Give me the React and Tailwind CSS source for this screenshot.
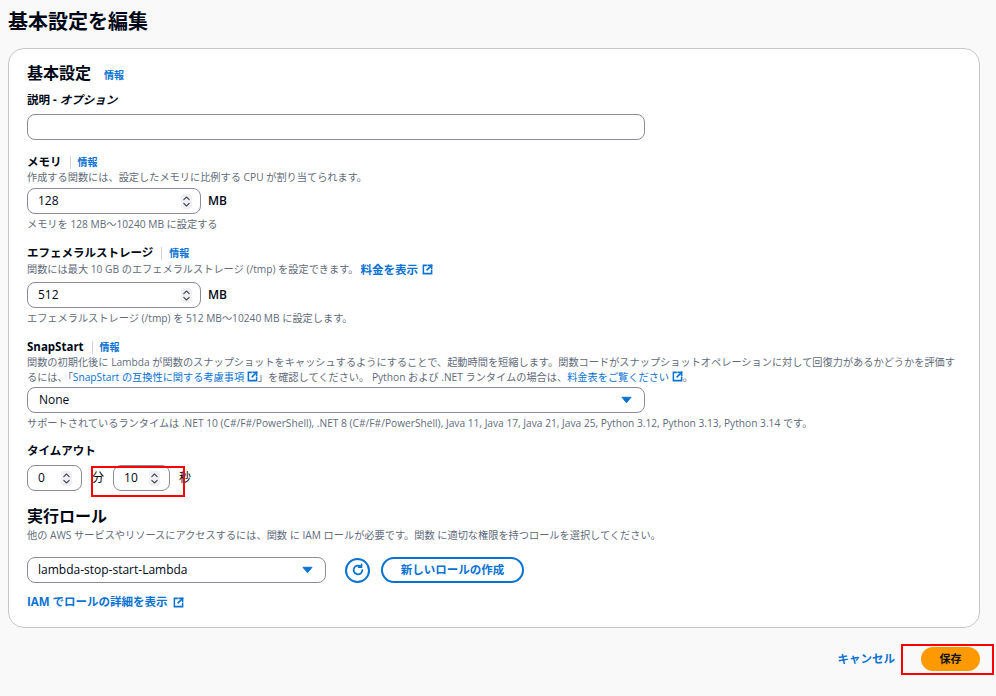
import React from "react";

const FONT = { fontFamily: '"Open Sans", "Noto Sans CJK JP", sans-serif' };

function Ext({ className = "" }) {
  return (
    <svg viewBox="0 0 16 16" className={"inline-block w-[11px] h-[11px] " + className} fill="none" stroke="currentColor" strokeWidth="2.2" strokeLinecap="square">
      <path d="M6 2H2v12h12v-4" />
      <path d="M9 2h5v5" />
      <path d="M14 2L7.5 8.5" />
    </svg>
  );
}

function Info() {
  return <a className="text-[10px] font-bold text-[#0972d3] leading-[16px]">情報</a>;
}

function Label({ children, info, className = "" }) {
  return (
    <div className={"flex items-center text-[11.5px] font-bold leading-[16px] text-[#000716] " + className}>
      <span>{children}</span>
      {info && (
        <>
          <span className="ml-[8px] mr-[7px] h-[13px] w-px bg-[#d1d1d6]" />
          <Info />
        </>
      )}
    </div>
  );
}

function Desc({ children, className = "" }) {
  return <div className={"text-[10.2px] leading-[15px] text-[#5f6b7a] " + className}>{children}</div>;
}

function Spinner() {
  return (
    <span className="flex h-[15px] w-[11px] items-center justify-center rounded-[3px] bg-[#f0f0f2]">
      <svg viewBox="0 0 10 14" className="h-[13px] w-[9px]" fill="none" stroke="#414d5c" strokeWidth="1.3" strokeLinecap="round" strokeLinejoin="round">
        <path d="M2 5L5 2l3 3" />
        <path d="M2 9l3 3 3-3" />
      </svg>
    </span>
  );
}

function NumInput({ value, w, pl = "pl-[10px]", pr = "pr-[9px]" }) {
  return (
    <div className={"flex h-[26px] items-center justify-between rounded-[8px] border border-[#8c8c94] bg-white text-[12px] text-[#000716] " + w + " " + pl + " " + pr}>
      <span>{value}</span>
      <Spinner />
    </div>
  );
}

function Caret() {
  return (
    <svg viewBox="0 0 12 8" className="h-[8px] w-[11px]">
      <path d="M1 1h10L6 7z" fill="#0972d3" stroke="#0972d3" strokeWidth="1" strokeLinejoin="round" />
    </svg>
  );
}

export default function App() {
  return (
    <div className="h-[696px] w-[996px] overflow-hidden bg-[#f9f9fa] text-[#000716]" style={FONT}>
      <h1 className="px-2 pt-[9px] text-[20px] font-bold leading-[26px]">基本設定を編集</h1>

      <div className="ml-2 mt-[13px] h-[580px] w-[972px] rounded-[16px] border border-[#c6c6cd] bg-white px-[18px] pt-[13px]">
        <div className="flex items-center leading-[22px]">
          <span className="text-[16px] font-bold">基本設定</span>
          <span className="ml-[13px]"><Info /></span>
        </div>

        <Label className="mt-[8px]">
          説明 - <i>オプション</i>
        </Label>
        <div className="mt-[6px] h-[26px] w-[618px] rounded-[8px] border border-[#8c8c94]" />

        <Label className="mt-[14px]" info>メモリ</Label>
        <Desc>作成する関数には、設定したメモリに比例する CPU が割り当てられます。</Desc>
        <div className="mt-[3px] flex items-center">
          <NumInput value="128" w="w-[174px]" pr="pr-[8px]" />
          <span className="ml-[7px] text-[12px] font-semibold">MB</span>
        </div>
        <Desc className="mt-[3px]">メモリを 128 MB～10240 MB に設定する</Desc>

        <Label className="mt-[13px]" info>エフェメラルストレージ</Label>
        <div className="mt-[1px] flex items-center text-[10.2px] leading-[15px] text-[#5f6b7a]">
          関数には最大 10 GB のエフェメラルストレージ (/tmp) を設定できます。
          <a className="ml-[2px] flex items-center gap-[4px] text-[11.5px] font-bold text-[#0972d3]">
            料金を表示 <Ext />
          </a>
        </div>
        <div className="mt-[5px] flex items-center">
          <NumInput value="512" w="w-[174px]" pr="pr-[8px]" />
          <span className="ml-[7px] text-[12px] font-semibold">MB</span>
        </div>
        <Desc className="mt-[3px]">エフェメラルストレージ (/tmp) を 512 MB～10240 MB に設定します。</Desc>

        <Label className="mt-[13px]" info>SnapStart</Label>
        <Desc className="whitespace-nowrap">
          関数の初期化後に Lambda が関数のスナップショットをキャッシュするようにすることで、起動時間を短縮します。関数コードがスナップショットオペレーションに対して回復力があるかどうかを評価す
          <br />
          るには、「<a className="text-[#0972d3]">SnapStart の互換性に関する考慮事項 <Ext className="align-[-1px] text-[#0972d3]" /></a>」を確認してください。 Python および .NET ランタイムの場合は、
          <a className="text-[#0972d3]">料金表をご覧ください <Ext className="align-[-1px]" /></a>。
        </Desc>
        <div className="mt-[2px] flex h-[26px] w-[618px] items-center justify-between rounded-[8px] border border-[#8c8c94] pl-[11px] pr-[12px] text-[12px]">
          <span>None</span>
          <Caret />
        </div>
        <Desc className="mt-[3px]">
          サポートされているランタイムは .NET 10 (C#/F#/PowerShell), .NET 8 (C#/F#/PowerShell), Java 11, Java 17, Java 21, Java 25, Python 3.12, Python 3.13, Python 3.14 です。
        </Desc>

        <Label className="mt-[12px]">タイムアウト</Label>
        <div className="relative mt-[6px] flex items-center text-[12px]">
          <NumInput value="0" w="w-[55px]" pr="pr-[9px]" />
          <span className="ml-[10px]">分</span>
          <span className="ml-[9px]"><NumInput value="10" w="w-[57px]" pl="pl-[10px]" pr="pr-[9px]" /></span>
          <span className="ml-[9px]">秒</span>
          <div className="absolute left-[64px] top-[1px] h-[31px] w-[94px] border-2 border-[#ff0000]" />
        </div>

        <div className="mt-[14px] text-[16px] font-bold leading-[22px]">実行ロール</div>
        <Desc className="mt-[1px]">他の AWS サービスやリソースにアクセスするには、関数 に IAM ロールが必要です。関数 に適切な権限を持つロールを選択してください。</Desc>
        <div className="mt-[14px] flex items-center">
          <div className="flex h-[26px] w-[299px] items-center justify-between rounded-[8px] border border-[#8c8c94] pl-[10px] pr-[12px] text-[12px]">
            <span>lambda-stop-start-Lambda</span>
            <Caret />
          </div>
          <div className="ml-[19px] flex h-[25px] w-[25px] items-center justify-center rounded-full border-2 border-[#0972d3]">
            <svg viewBox="0 0 16 16" className="h-[14px] w-[14px]" fill="none" stroke="#0972d3" strokeWidth="2" strokeLinecap="round" strokeLinejoin="round">
              <path d="M13 8a5 5 0 1 1-1.6-3.7" />
              <path d="M12 1.5v3.3H8.7" />
            </svg>
          </div>
          <div className="ml-[11px] flex h-[26px] w-[143px] items-center justify-center rounded-full border-2 border-[#0972d3] text-[11.5px] font-bold text-[#0972d3]">
            新しいロールの作成
          </div>
        </div>
        <a className="mt-[11px] flex items-center gap-[5px] text-[11.5px] font-bold leading-[16px] text-[#0972d3]">
          IAM でロールの詳細を表示 <Ext />
        </a>
      </div>

      <div className="mr-4 mt-[19px] flex items-center justify-end">
        <a className="text-[11.5px] font-bold text-[#0972d3]">キャンセル</a>
        <div className="relative ml-[26px]">
          <div className="flex h-[24px] w-[59px] items-center justify-center rounded-full bg-[#ff9900] text-[11px] font-bold text-[#0f141a]">
            保存
          </div>
          <div className="absolute -left-[20px] -top-[3px] h-[31px] w-[93px] border-2 border-[#ff0000]" />
        </div>
      </div>
    </div>
  );
}
